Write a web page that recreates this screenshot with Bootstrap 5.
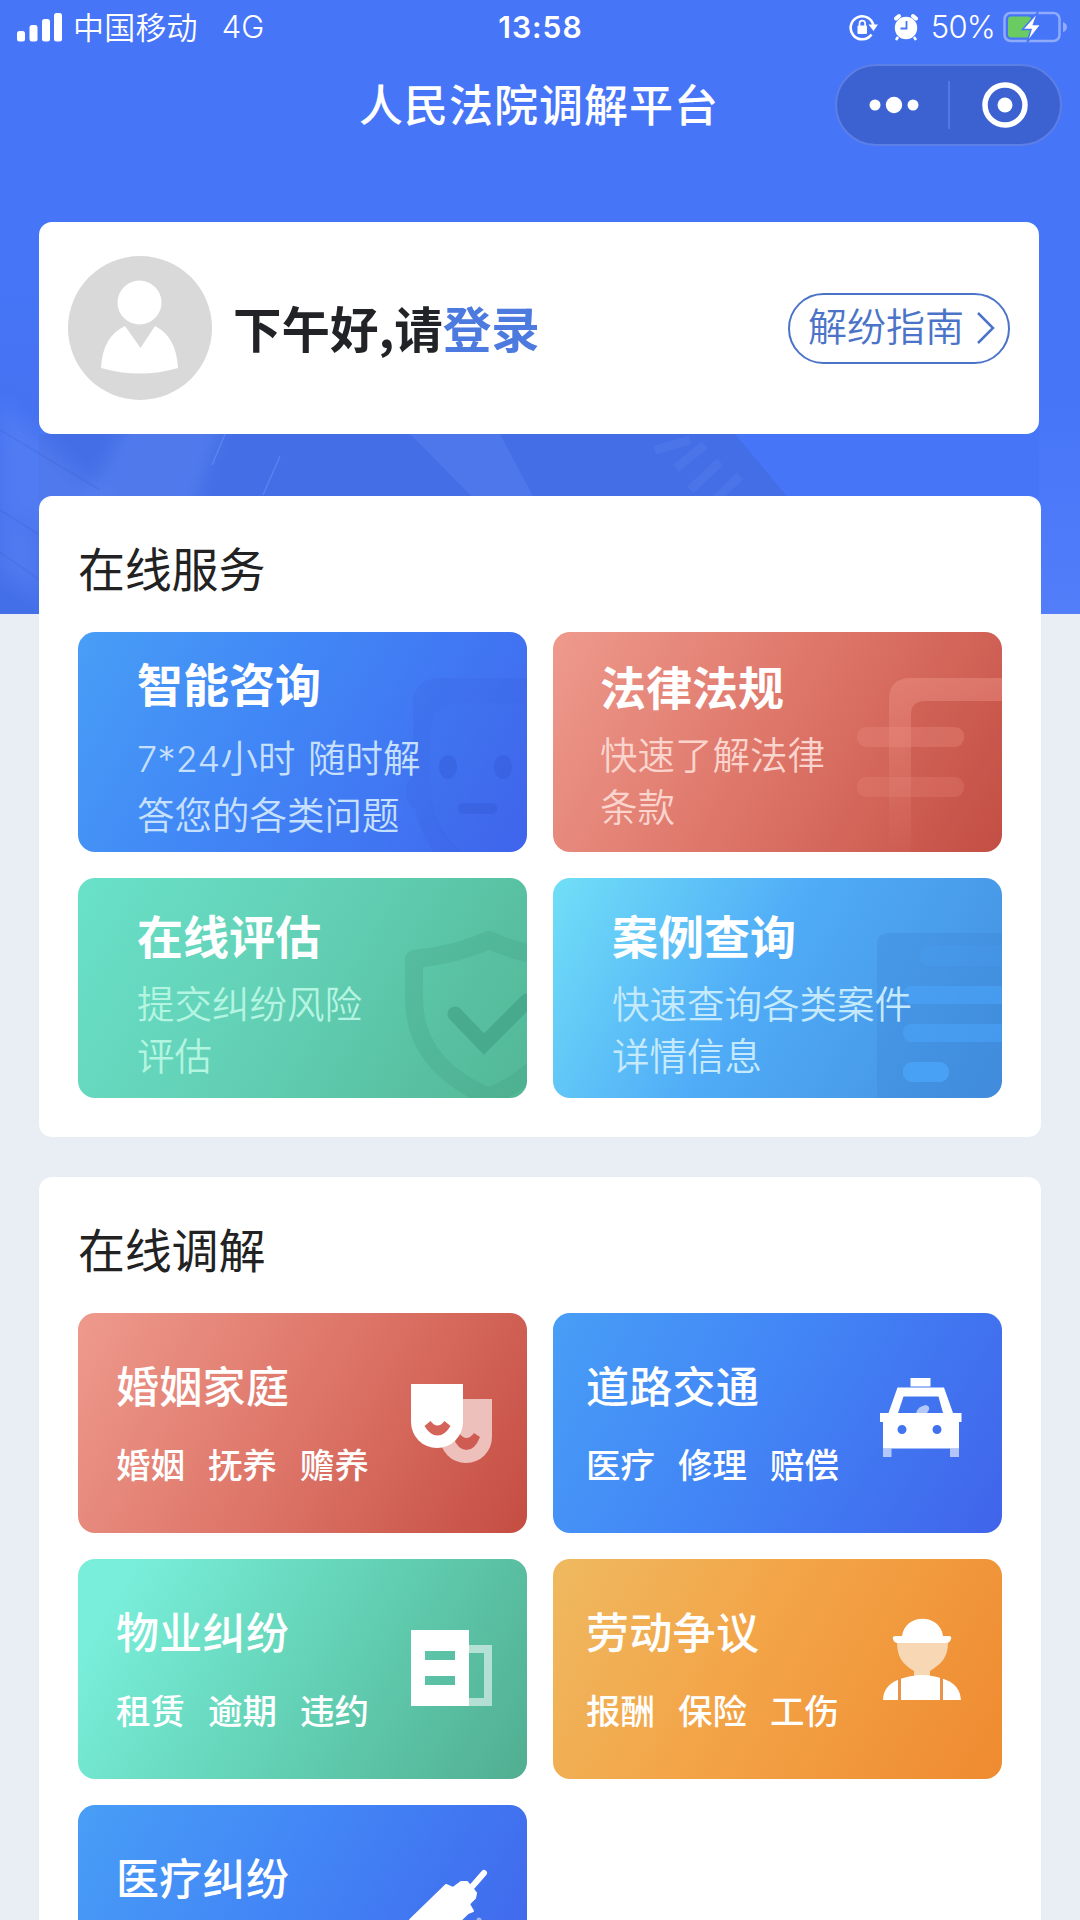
<!DOCTYPE html>
<html lang="zh-CN">
<head>
<meta charset="utf-8">
<meta name="viewport" content="width=device-width, initial-scale=1">
<title>人民法院调解平台</title>
<link href="https://cdn.jsdelivr.net/npm/bootstrap@5.3.0/dist/css/bootstrap.min.css" rel="stylesheet">
<style>
body{width:1080px;height:1920px;overflow:hidden;background:#e9edf4;font-family:"Noto Sans CJK SC",sans-serif;color:#222}
svg{display:block;flex:none}
.hero{height:614px;background:#4675f8}
.hero-art{left:0;top:0}
.status{height:54px;padding:0 13px 0 17px;font-size:31px;line-height:54px}
.carrier{font-weight:350;margin-left:10px;line-height:50px;padding-bottom:3px;letter-spacing:.2px}
.latin{font-family:Inter,"Liberation Sans",sans-serif}
.status-side{width:420px}
.clock{font-size:30px;font-weight:600;letter-spacing:1px;margin-right:3px}
.pct{font-size:31px;letter-spacing:-.8px;margin-left:13px;font-weight:350}
.titlebar{height:102px;padding:0 18px 0 359px}
.app-title{font-size:44px;font-weight:500;letter-spacing:1px;line-height:60px;margin-bottom:5px}
.capsule{width:227px;height:82px;background:#3c62d2;border:2px solid #5c7fe6}
.panel{border-radius:13px;background:#fff}
.login{height:212px;width:1000px;margin:66px 0 0 39px;padding:0 29px}
.greet{font-size:48.500px;font-weight:600;line-height:64px;color:#222326;margin:-2px 0 0 21px}
.greet a{color:#4c7ade;text-decoration:none}
.guide{width:222px;height:71px;border:2.5px solid #4b74c8;color:#4b74c8;font-size:39px;font-weight:350;line-height:58px;padding:0 13px 0 18px}
.guide span{margin-top:-9px}
.sect{width:1002px;margin-left:39px;padding:0 39px}
.sect-services{margin-top:-118px;height:641px}
.sect-mediate{margin-top:40px;height:743px;border-radius:13px 13px 0 0}
.sect-title{font-size:47px;font-weight:400;line-height:60px;padding-top:41px;margin:0 0 35px;letter-spacing:-.2px}
.tiles{display:grid;grid-template-columns:449px 449px;gap:26px}
.tile{height:220px;border-radius:17px;color:#fff}
.tile h3{font-size:46px;font-weight:700;line-height:56px;margin:0;letter-spacing:0}
.tile p{font-size:37.5px;font-weight:350;margin:0;line-height:52px;position:relative}
.mark-art{right:0;top:0}
.t-ask{padding:22px 0 0 59px;background:linear-gradient(120deg,#489ef6 0%,#4186f6 42%,#4066ee 100%)}
.t-ask p{line-height:57px;margin-top:17px;color:#c7e0fd}
.t-ask .latin{font-size:36px;font-weight:300;letter-spacing:.3px;line-height:1}
.t-ask .gap-word{margin-left:4px}
.t-law{padding:25px 0 0 47px;background:linear-gradient(120deg,#ee9a8d 0%,#dd7568 50%,#c55046 100%)}
.t-law p{margin-top:14px;color:#fbd4cd}
.t-eval{padding:28px 0 0 59px;background:linear-gradient(120deg,#69e1c9 0%,#62cfb4 48%,#52b795 100%)}
.t-eval p{margin-top:14px;color:#b4f5e2}
.t-case{padding:28px 0 0 59px;background:linear-gradient(120deg,#71dff7 0%,#50acf7 45%,#438fe0 100%)}
.t-case p{margin-top:14px;color:#c5eafd}
.topic{padding:43px 29px 0 38px}
.topic.r{padding:43px 34px 0 33px}
.topic h3{font-size:43px;font-weight:500;letter-spacing:.3px}
.topic p{font-size:34.500px;font-weight:500;line-height:46px;margin-top:28px;gap:23px}
.topic svg{margin-top:16px}
.red{background:linear-gradient(120deg,#ee9a8d 0%,#dd7568 50%,#c54d42 100%)}
.blue{background:linear-gradient(120deg,#489ef6 0%,#4285f6 45%,#4064ea 100%)}
.green{background:linear-gradient(120deg,#79eeda 10%,#64d3b7 50%,#51ae90 100%)}
.orange{background:linear-gradient(120deg,#efb960 0%,#f3a548 42%,#ef8a30 100%)}
</style>
</head>
<body>
<header class="hero position-relative">
  <svg class="hero-art position-absolute" width="1080" height="614" viewBox="0 0 1080 614">
    <defs>
      <linearGradient id="fade" x1="0" y1="0" x2="0" y2="1"><stop offset="0" stop-color="#3f66d2" stop-opacity="0"/><stop offset="1" stop-color="#3f66d2" stop-opacity=".4"/></linearGradient>
      <linearGradient id="glow" x1="0" y1="0" x2="0" y2="1"><stop offset=".4" stop-color="#7b9cff" stop-opacity="0"/><stop offset="1" stop-color="#7b9cff" stop-opacity=".22"/></linearGradient>
      <filter id="soft"><feGaussianBlur stdDeviation="9"/></filter>
    </defs>
    <path d="M0 260L40 240V614H0Z" fill="url(#fade)"/>
    <path d="M39 434H735L790 500H39Z" fill="#4169da" opacity=".6"/>
    <g filter="url(#soft)" fill="#6d92fa"><path d="M130 415H225L190 520H75Z" opacity=".32"/><path d="M0 400L110 500 60 540 0 510Z" opacity=".28"/><path d="M0 510L40 540V600L0 570Z" opacity=".3"/></g>
    <path d="M410 434H500L535 500H475Z" fill="#6d92fa" opacity=".25"/>
    <path d="M225 434L212 465 M280 456L263 495" fill="none" stroke="#7d9dfa" stroke-width="1.500" opacity=".4"/>
    <path d="M0 430L100 490M0 510L40 535M0 552L40 580" stroke="#3558c4" stroke-width="1.500" opacity=".2"/>
    <path d="M655 450L690 440 M676 468L705 445 M690 490L720 462 M715 500L740 476" stroke="#6488f5" stroke-width="9" opacity=".25"/>
    <path d="M1039 250H1080V614H1039Z" fill="url(#glow)"/>
  </svg>
  <div class="position-relative text-white">
    <div class="status d-flex justify-content-between align-items-center">
      <div class="status-side d-flex align-items-center">
        <svg width="46" height="30" viewBox="0 0 46 30" fill="#fff"><rect y="19" width="8" height="10.500" rx="2.500"/><rect x="12.500" y="13" width="8" height="16.500" rx="2.500"/><rect x="25" y="7" width="8" height="22.500" rx="2.500"/><rect x="37" y="1" width="8" height="28.500" rx="2.500"/></svg>
        <span class="carrier">中国移动</span><span class="latin fw-light ms-4">4G</span>
      </div>
      <div class="clock latin">13:58</div>
      <div class="status-side d-flex align-items-center justify-content-end">
        <svg width="29" height="28" viewBox="0 0 29 28"><path d="M22.500 21.500A11.500 11.500 0 1 1 24.500 13" fill="none" stroke="#fff" stroke-width="2.600"/><path d="M19.500 11.500h9.500l-4.500 6.500z" fill="#fff"/><rect x="8.500" y="12.500" width="9.500" height="8.500" rx="1" fill="#fff"/><path d="M10.500 13V10.500a2.800 2.800 0 0 1 5.600 0V13" fill="none" stroke="#fff" stroke-width="1.700"/></svg>
        <svg class="ms-3" width="24" height="28" viewBox="1 0 24 28"><circle cx="13" cy="15" r="11.200" fill="#fff"/><path d="M3 5.500L6 3M23 5.500L20 3" stroke="#fff" stroke-width="4" stroke-linecap="round"/><path d="M5 24l-2 3M21 24l2 3" stroke="#fff" stroke-width="2.500"/><path d="M13.500 8V15.500H7.500" fill="none" stroke="#4675f8" stroke-width="1.800"/></svg>
        <span class="latin pct">50%</span>
        <svg class="ms-2" width="64" height="34" viewBox="0 0 64 34"><rect x="1.500" y="3" width="55" height="28" rx="6" fill="none" stroke="#8fabf9" stroke-width="2.500"/><path d="M60 12v10q4-1.500 4-5t-4-5" fill="#8fabf9"/><rect x="5" y="6.500" width="23" height="21" rx="3" fill="#69cb62"/><path d="M35 2L19.500 19.500H28L24 32.500L38 14.500H30.500Z" fill="#fff" stroke="#4675f8" stroke-width="1.500"/></svg>
      </div>
    </div>
    <div class="titlebar d-flex justify-content-between align-items-center">
      <div class="app-title">人民法院调解平台</div>
      <div class="capsule rounded-pill">
        <svg width="222" height="78" viewBox="2 2 222 78"><g fill="#fff"><circle cx="40" cy="41" r="5.500"/><circle cx="59" cy="41" r="8.200"/><circle cx="78" cy="41" r="5.500"/><circle cx="170" cy="41" r="7.500"/></g><circle cx="170" cy="41" r="20" fill="none" stroke="#fff" stroke-width="5.500"/><path d="M114 17V65" stroke="#5c7fe6" stroke-width="1.500"/></svg>
      </div>
    </div>
    <div class="login panel d-flex align-items-center">
      <svg width="144" height="144" viewBox="0 0 144 144"><circle cx="72" cy="72" r="72" fill="#d9d9d9"/><circle cx="71.500" cy="46.500" r="22" fill="#fff"/><path d="M57 70L72.500 92L87 70C101 77 109 91 110 112Q72 123 33 112C34 91 42 77 57 70Z" fill="#fff"/></svg>
      <div class="greet">下午好,请<a href="#">登录</a></div>
      <div class="guide rounded-pill d-flex justify-content-between align-items-center ms-auto"><span>解纷指南</span><svg width="18" height="32" viewBox="0 0 18 32"><path d="M1 1L16 16L1 31" fill="none" stroke="#4b74c8" stroke-width="2.500"/></svg></div>
    </div>
  </div>
</header>

<main class="position-relative">
  <section class="sect sect-services panel">
    <h2 class="sect-title">在线服务</h2>
    <div class="tiles">
      <div class="tile t-ask position-relative overflow-hidden">
        <svg class="mark-art position-absolute" width="449" height="220" viewBox="0 0 449 220" fill="#2f55cf"><path opacity=".12" d="M356 220C345 205 340 190 338 178C325 172 325 150 335 145V70Q337 46 362 46H449V71H385Q352 71 352 100V145C352 190 368 205 383 220Z"/><path opacity=".06" d="M352 100Q352 71 385 71H449V220H383C360 205 352 180 352 145Z"/><ellipse opacity=".32" cx="370" cy="135" rx="9" ry="12"/><ellipse opacity=".32" cx="425" cy="135" rx="9" ry="12"/><rect opacity=".35" x="380" y="171" width="39" height="11" rx="5"/></svg>
        <h3>智能咨询</h3><p><span class="latin">7*24</span>小时 <span class="gap-word">随时解</span><br>答您的各类问题</p>
      </div>
      <div class="tile t-law position-relative overflow-hidden">
        <svg class="mark-art position-absolute" width="449" height="220" viewBox="0 0 449 220"><defs><linearGradient id="lw" x1="0" y1="0" x2="0" y2="1"><stop offset="0" stop-color="#f0978b" stop-opacity=".42"/><stop offset="1" stop-color="#f0978b" stop-opacity="0"/></linearGradient></defs><path d="M336 220V68Q336 46 358 46H449V69H372Q358 69 358 83V220Z" fill="url(#lw)"/><path d="M358 220V83Q358 69 372 69H449V220Z" fill="#b8453c" opacity=".1"/><rect x="304" y="95" width="107" height="20" rx="9" fill="#ec8d81" opacity=".35"/><rect x="304" y="145" width="107" height="20" rx="9" fill="#ec8d81" opacity=".25"/></svg>
        <h3>法律法规</h3><p>快速了解法律<br>条款</p>
      </div>
      <div class="tile t-eval position-relative overflow-hidden">
        <svg class="mark-art position-absolute" width="449" height="220" viewBox="0 0 449 220" fill="none"><path d="M336 81Q378 77 411 62Q444 77 486 81V120C486 170 455 200 411 219C367 200 336 170 336 120Z" stroke="#419b80" stroke-opacity=".25" stroke-width="18" stroke-linejoin="round"/><path d="M377 136L406 166L449 123" stroke="#43a286" stroke-opacity=".7" stroke-width="15" stroke-linecap="round"/></svg>
        <h3>在线评估</h3><p>提交纠纷风险<br>评估</p>
      </div>
      <div class="tile t-case position-relative overflow-hidden">
        <svg class="mark-art position-absolute" width="449" height="220" viewBox="0 0 449 220"><path d="M324 220V67Q324 55 336 55H449V220Z" fill="#3679cc" opacity=".22"/><g fill="#4ba5fb"><rect x="367" y="68" width="92" height="20" rx="8" opacity=".2"/><rect x="350" y="108" width="109" height="18" rx="8" opacity=".55"/><rect x="350" y="146" width="109" height="18" rx="8" opacity=".55"/><rect x="350" y="184" width="46" height="20" rx="9" opacity=".8"/></g></svg>
        <h3>案例查询</h3><p>快速查询各类案件<br>详情信息</p>
      </div>
    </div>
  </section>

  <section class="sect sect-mediate panel overflow-hidden">
    <h2 class="sect-title">在线调解</h2>
    <div class="tiles">
      <div class="tile topic red d-flex justify-content-between">
        <div><h3>婚姻家庭</h3><p class="d-flex"><span>婚姻</span><span>抚养</span><span>赡养</span></p></div>
        <svg width="90" height="100" viewBox="0 0 90 100"><path d="M32 27H84V65a26 26 0 0 1-52 0Z" fill="#edc0bc"/><path d="M45 65L51 61Q58.500 71 66 61L72 65Q67 78 58.500 78Q50 78 45 65Z" fill="#cf5c52"/><path d="M3 12H55V50a26 26 0 0 1-52 0Z" fill="#fff"/><path d="M16.500 54L22.500 49Q29.500 58 36.500 49L42.500 54Q37 63.500 29.500 63.500Q22 63.500 16.500 54Z" fill="#d46459"/></svg>
      </div>
      <div class="tile topic r blue d-flex justify-content-between">
        <div><h3>道路交通</h3><p class="d-flex"><span>医疗</span><span>修理</span><span>赔偿</span></p></div>
        <svg width="90" height="100" viewBox="0 0 90 100" fill="#fff"><rect x="32.500" y="6" width="20" height="8.500"/><path fill-rule="evenodd" d="M19.500 15.500H66L75 41H83.500V50H81V76.500H5V50H2V41H10.500ZM25.500 24.500L20 41H65L60.500 24.500ZM19.500 57.500a4.500 4.500 0 1 0 9 0a4.500 4.500 0 1 0-9 0M54.500 57.500a4.500 4.500 0 1 0 9 0a4.500 4.500 0 1 0-9 0"/><path d="M5 76.500h8.500V85H5zM72 76.500h9V85h-9zM38 41Q40 34 48 33Q54 35 49 41Z" opacity=".6"/></svg>
      </div>
      <div class="tile topic green d-flex justify-content-between">
        <div><h3>物业纠纷</h3><p class="d-flex"><span>租赁</span><span>逾期</span><span>违约</span></p></div>
        <svg width="90" height="100" viewBox="0 0 90 100" fill="#fff" fill-rule="evenodd"><path d="M3 12H61V88H3ZM17 33V42H47V33ZM17 58V67H47V58Z"/><path d="M61 27H84V88H61V80H76V35H61Z" opacity=".55"/></svg>
      </div>
      <div class="tile topic r orange d-flex justify-content-between">
        <div><h3>劳动争议</h3><p class="d-flex"><span>报酬</span><span>保险</span><span>工伤</span></p></div>
        <svg width="90" height="100" viewBox="0 0 90 100" fill="#fff"><path d="M19 24H70C70 40 63 46 52 53V60H36V53C25 46 19 40 19 24Z" fill="#f8d8b4"/><path d="M24 18C27-5 62-5 65 18H71Q74 18 73 21Q72 25 68 25H20Q16 25 15 21Q14 18 18 18Z"/><path d="M5 82C6 66 18 61 34 58Q44 56 54 58C70 61 82 66 83 82Z"/><path d="M21.500 60V82M63.500 60V82" stroke="#e9934c" stroke-width="3"/></svg>
      </div>
      <div class="tile topic blue d-flex justify-content-between">
        <div><h3>医疗纠纷</h3></div>
        <svg width="90" height="100" viewBox="0 0 90 100" fill="#fff" stroke="#fff" stroke-linejoin="round" stroke-linecap="round"><path d="M76 9L62 25" stroke-width="6"/><path d="M38 21L45 24L53 18L59 18L68 29L67 34L61 40L65 47L60 49L20 88L-6 66L3 55Z" stroke-width="2"/><circle cx="71" cy="56" r="2.500" opacity=".5" stroke="none"/></svg>
      </div>
    </div>
  </section>
</main>
<script src="https://cdn.jsdelivr.net/npm/bootstrap@5.3.0/dist/js/bootstrap.bundle.min.js"></script>
</body>
</html>
